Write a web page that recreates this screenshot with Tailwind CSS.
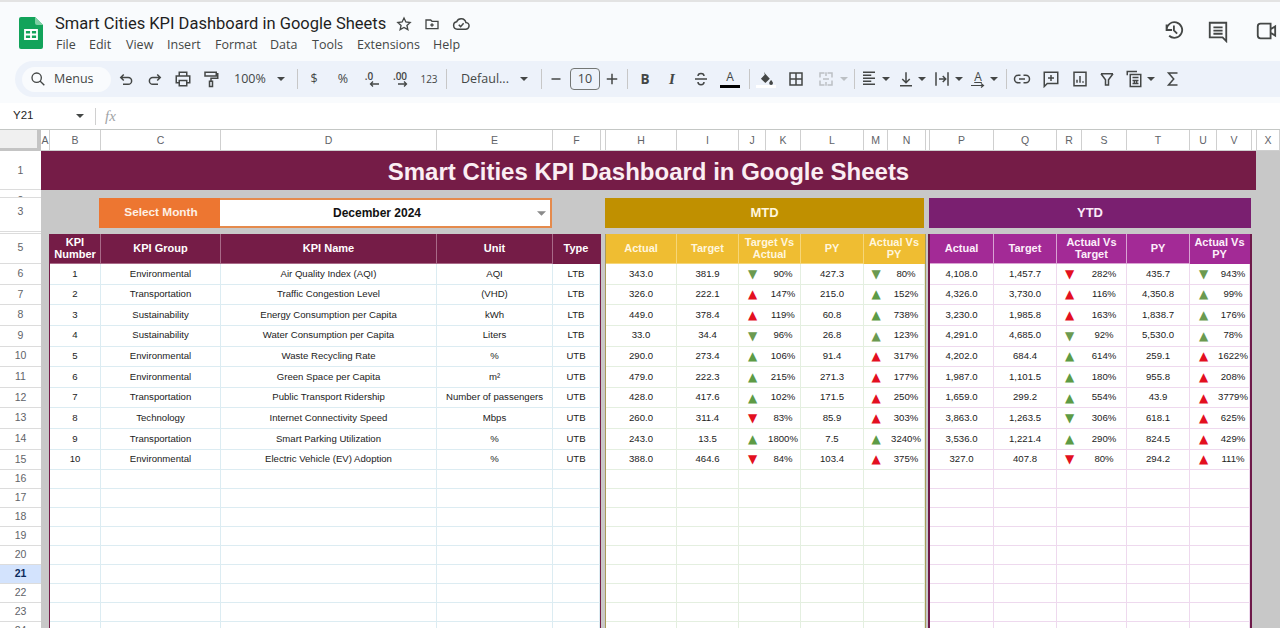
<!DOCTYPE html>
<html lang="en">
<head>
<meta charset="utf-8">
<title>Smart Cities KPI Dashboard in Google Sheets</title>
<script src="https://cdn.jsdelivr.net/npm/@tailwindcss/browser@4"></script>
</head>
<body class="w-[1280px] h-[628px] overflow-hidden bg-[#c8c8c8] font-['Liberation_Sans',Arial,sans-serif]">

<header class="h-[103px] bg-[#f9fbfd] border-t-2 border-[#e3e3e3] flex flex-col relative">
  <div class="h-[59px] flex items-start shrink-0">
    <svg class="w-[24px] h-[32px] ml-[19px] mt-[15px] shrink-0" viewBox="0 0 24 32"><path d="M2 0h14l8 8v22a2 2 0 0 1-2 2H2a2 2 0 0 1-2-2V2a2 2 0 0 1 2-2z" fill="#12a35a"/><path d="M16 0l8 8h-6a2 2 0 0 1-2-2z" fill="#7fcfa4"/><path d="M6 13h12v9H6z" fill="none" stroke="#fff" stroke-width="1.8"/><path d="M6 17.500h12M12 13v9" stroke="#fff" stroke-width="1.8"/></svg>
    <div class="ml-[12px] flex flex-col font-['Open_Sans',sans-serif]">
      <div class="flex items-center h-[24px] mt-[10px]">
        <span class="text-[16.500px] leading-[24px] font-['Roboto',sans-serif] text-[#1f1f1f] whitespace-nowrap w-[324px]">Smart Cities KPI Dashboard in Google Sheets</span>
        <svg class="w-[16px] h-[16px] ml-[17px] fill-none stroke-[#444746] stroke-2" viewBox="0 0 24 24"><path d="M12 3l2.800 6 6.400.7-4.800 4.400 1.400 6.400L12 17.200l-5.800 3.300 1.400-6.400L2.800 9.700 9.200 9z"/></svg>
        <svg class="w-[16px] h-[16px] ml-[12px] fill-none stroke-[#444746] stroke-2" viewBox="0 0 24 24"><path d="M3 6h7l2 2h9v11H3zM12 11v5M9.500 13.500h5"/></svg>
        <svg class="w-[18px] h-[18px] ml-[12px] fill-none stroke-[#444746] stroke-2" viewBox="0 0 24 24"><path d="M7 19a5 5 0 0 1-.8-9.900A6.500 6.500 0 0 1 18.500 10 4.500 4.500 0 0 1 18 19zM9 13l2.500 2.500L15.500 11"/></svg>
      </div>
      <nav class="flex text-[12.500px] leading-[18px] text-[#444746]">
        <span class="w-[33px] ml-[1px]">File</span><span class="w-[37px]">Edit</span><span class="w-[41px]">View</span><span class="w-[48px]">Insert</span><span class="w-[55px]">Format</span><span class="w-[42px]">Data</span><span class="w-[45px]">Tools</span><span class="w-[76px]">Extensions</span><span>Help</span>
      </nav>
    </div>
    <svg class="w-[22px] h-[22px] absolute left-[1162px] top-[17px] fill-none stroke-[#444746] stroke-2" viewBox="0 0 24 24"><path d="M4 12a8.500 8.500 0 1 1 2.800 6.300M4 6v6h6M12 7v5.500l3.500 3.500" transform="translate(1 0)"/></svg>
    <svg class="w-[22px] h-[24px] absolute left-[1207px] top-[17px] fill-none stroke-[#444746] stroke-2" viewBox="0 0 24 24"><path d="M3 3h18v20l-4-4H3zM7 8h10M7 11.500h10M7 15h10"/></svg>
    <svg class="w-[24px] h-[22px] absolute left-[1254px] top-[18px] fill-none stroke-[#444746] stroke-2" viewBox="0 0 24 24"><path d="M6 4h11v16H6a3 3 0 0 1-3-3V7a3 3 0 0 1 3-3zM17 10l5-3v10l-5-3"/></svg>
  </div>

  <div class="h-[36px] ml-[15px] rounded-l-[18px] bg-[#edf2fa] flex items-center pl-[7px] text-[#444746] font-['Open_Sans',sans-serif]">
    <div class="w-[89px] h-[25px] rounded-full bg-[#f9fbfd] flex items-center shrink-0">
      <svg class="w-[16px] h-[16px] ml-[8px] fill-none stroke-[#444746] stroke-2" viewBox="0 0 24 24"><path d="M10 3a7 7 0 1 1 0 14 7 7 0 0 1 0-14zM15 15l6.500 6.500"/></svg>
      <span class="ml-[8px] text-[12.500px]">Menus</span>
    </div>
    <svg class="w-[18px] h-[18px] ml-[6px] shrink-0 fill-none stroke-[#444746] stroke-2" viewBox="0 0 24 24"><path d="M9 6L5 10l4 4M5 10h10a4.500 4.500 0 0 1 0 9H8"/></svg>
    <svg class="w-[18px] h-[18px] ml-[11px] shrink-0 fill-none stroke-[#444746] stroke-2" viewBox="0 0 24 24"><path d="M15 6l4 4-4 4M19 10H9a4.500 4.500 0 0 0 0 9h7"/></svg>
    <svg class="w-[18px] h-[18px] ml-[10px] shrink-0 fill-none stroke-[#444746] stroke-2" viewBox="0 0 24 24"><path d="M7 8V3h10v5M7 17H3V8h18v9h-4M7 14h10v7H7z"/></svg>
    <svg class="w-[18px] h-[18px] ml-[10px] shrink-0 fill-none stroke-[#444746] stroke-2" viewBox="0 0 24 24"><path d="M4 3h15v5H4zM19 5h2v6h-9v4M10 15h4v7h-4z"/></svg>
    <span class="w-[32px] ml-[14px] text-[12.500px] shrink-0">100%</span>
    <svg class="w-[8px] h-[4px] ml-[11px] shrink-0 fill-[#444746]" viewBox="0 0 8 4"><path d="M0 0h8L4 4z"/></svg>
    <div class="w-px h-[20px] ml-[12px] bg-[#c7c7c7] shrink-0"></div>
    <span class="w-[18px] ml-[7px] text-center text-[12.500px] shrink-0">$</span>
    <span class="w-[18px] ml-[11px] text-center text-[12.500px] shrink-0">%</span>
    <span class="w-[18px] ml-[10px] flex flex-col items-center leading-none shrink-0"><span class="text-[10px] font-semibold leading-[10px] -ml-[4px]">.0</span><svg class="w-[10px] h-[6px] ml-[5px]" viewBox="0 0 10 6"><path d="M10 3H2M4 .500L1.500 3 4 5.500" fill="none" stroke="#444746" stroke-width="1.300"/></svg></span>
    <span class="w-[18px] ml-[11px] flex flex-col items-center leading-none shrink-0"><span class="text-[10px] font-semibold leading-[10px]">.00</span><svg class="w-[10px] h-[6px] ml-[5px]" viewBox="0 0 10 6"><path d="M0 3h8M6 .500L8.500 3 6 5.500" fill="none" stroke="#444746" stroke-width="1.300"/></svg></span>
    <span class="w-[18px] ml-[11px] text-center text-[10px] shrink-0">123</span>
    <div class="w-px h-[20px] ml-[8px] bg-[#c7c7c7] shrink-0"></div>
    <span class="w-[50px] ml-[14px] text-[12.500px] whitespace-nowrap shrink-0">Defaul...</span>
    <svg class="w-[8px] h-[4px] ml-[9px] shrink-0 fill-[#444746]" viewBox="0 0 8 4"><path d="M0 0h8L4 4z"/></svg>
    <div class="w-px h-[20px] ml-[13px] bg-[#c7c7c7] shrink-0"></div>
    <svg class="w-[18px] h-[18px] ml-[5px] shrink-0 stroke-[#444746] stroke-2" viewBox="0 0 24 24"><path d="M6 12h12"/></svg>
    <span class="w-[30px] h-[22px] ml-[5px] border border-[#747775] rounded-[4px] flex items-center justify-center text-[12.500px] shrink-0">10</span>
    <svg class="w-[18px] h-[18px] ml-[3px] shrink-0 stroke-[#444746] stroke-2" viewBox="0 0 24 24"><path d="M5 12h14M12 5v14"/></svg>
    <div class="w-px h-[20px] ml-[6px] bg-[#c7c7c7] shrink-0"></div>
    <span class="w-[18px] ml-[8px] text-center text-[13.500px] font-bold shrink-0">B</span>
    <span class="w-[18px] ml-[9px] text-center text-[15px] italic font-semibold font-['Liberation_Serif',serif] shrink-0">I</span>
    <svg class="w-[18px] h-[18px] ml-[11px] shrink-0 fill-none stroke-[#444746] stroke-2" viewBox="0 0 24 24"><path d="M4 12h16M8 8a4 3.500 0 0 1 8 0M8 16a4 3.500 0 0 0 8 0"/></svg>
    <span class="w-[18px] ml-[11px] flex flex-col items-center shrink-0"><span class="text-[12px] leading-[12px]">A</span><span class="w-[20px] h-[3px] mt-[2px] bg-black"></span></span>
    <div class="w-px h-[20px] ml-[10px] bg-[#c7c7c7] shrink-0"></div>
    <span class="w-[18px] ml-[7px] flex flex-col items-center shrink-0"><svg class="w-[16px] h-[14px] fill-[#444746]" viewBox="0 0 24 22"><path d="M9 1l1.500 3L18 12l-7 7-7-7 6-6zM20 14s3 3.500 3 5a3 3 0 0 1-6 0c0-1.500 3-5 3-5z"/></svg><span class="w-[20px] h-[3px] bg-white"></span></span>
    <svg class="w-[18px] h-[18px] ml-[12px] shrink-0 fill-none stroke-[#444746] stroke-2" viewBox="0 0 24 24"><path d="M4 4h16v16H4zM12 4v16M4 12h16"/></svg>
    <svg class="w-[18px] h-[18px] ml-[12px] shrink-0 fill-none stroke-[#bcc0c4] stroke-2" viewBox="0 0 24 24"><path d="M4 10V4h6M14 4h6v6M4 14v6h6M14 20h6v-6M12 3v5M12 16v5M8 12h8"/></svg>
    <svg class="w-[8px] h-[4px] ml-[5px] shrink-0 fill-[#bcc0c4]" viewBox="0 0 8 4"><path d="M0 0h8L4 4z"/></svg>
    <div class="w-px h-[20px] ml-[6px] bg-[#c7c7c7] shrink-0"></div>
    <svg class="w-[18px] h-[18px] ml-[5px] shrink-0 stroke-[#444746] stroke-2" viewBox="0 0 24 24"><path d="M4 3h16M4 7h11M4 11h16M4 15h11M4 19h16"/></svg>
    <svg class="w-[8px] h-[4px] ml-[4px] shrink-0 fill-[#444746]" viewBox="0 0 8 4"><path d="M0 0h8L4 4z"/></svg>
    <svg class="w-[18px] h-[18px] ml-[7px] shrink-0 fill-none stroke-[#444746] stroke-2" viewBox="0 0 24 24"><path d="M12 3v13M7 12l5 5 5-5M4 21h16"/></svg>
    <svg class="w-[8px] h-[4px] ml-[3px] shrink-0 fill-[#444746]" viewBox="0 0 8 4"><path d="M0 0h8L4 4z"/></svg>
    <svg class="w-[18px] h-[18px] ml-[7px] shrink-0 fill-none stroke-[#444746] stroke-2" viewBox="0 0 24 24"><path d="M4 3v18M20 3v18M8 12h9M13 8l4 4-4 4"/></svg>
    <svg class="w-[8px] h-[4px] ml-[4px] shrink-0 fill-[#444746]" viewBox="0 0 8 4"><path d="M0 0h8L4 4z"/></svg>
    <span class="w-[18px] ml-[6px] flex flex-col items-center shrink-0"><span class="text-[12px] leading-[13px] underline">A</span><svg class="w-[14px] h-[5px]" viewBox="0 0 14 5"><path d="M0 2.500h12M10 .500l2.500 2-2.500 2" fill="none" stroke="#444746" stroke-width="1.200"/></svg></span>
    <svg class="w-[8px] h-[4px] ml-[3px] shrink-0 fill-[#444746]" viewBox="0 0 8 4"><path d="M0 0h8L4 4z"/></svg>
    <div class="w-px h-[20px] ml-[8px] bg-[#c7c7c7] shrink-0"></div>
    <svg class="w-[18px] h-[18px] ml-[6px] shrink-0 fill-none stroke-[#444746] stroke-2" viewBox="0 0 24 24"><path d="M10 7H7a5 5 0 0 0 0 10h3M14 7h3a5 5 0 0 1 0 10h-3M8 12h8"/></svg>
    <svg class="w-[18px] h-[18px] ml-[11px] shrink-0 fill-none stroke-[#444746] stroke-2" viewBox="0 0 24 24"><path d="M3 3h18v15H7l-4 4zM12 6.500v8M8 10.500h8"/></svg>
    <svg class="w-[18px] h-[18px] ml-[11px] shrink-0 fill-none stroke-[#444746] stroke-2" viewBox="0 0 24 24"><path d="M4 3h16v18H4zM8 17v-4M12 17V8M16 17v-2"/></svg>
    <svg class="w-[18px] h-[18px] ml-[9px] shrink-0 fill-none stroke-[#444746] stroke-2" viewBox="0 0 24 24"><path d="M4 5h16M4 5l6 8v7h4v-7l6-8"/></svg>
    <svg class="w-[18px] h-[18px] ml-[9px] shrink-0 fill-none stroke-[#444746] stroke-2" viewBox="0 0 24 24"><path d="M3 7V2h13M7 6h14v16H7zM10 10h8M10 14h8M10 18h8M12.500 13v6M15.500 13v6"/></svg>
    <svg class="w-[8px] h-[4px] ml-[4px] shrink-0 fill-[#444746]" viewBox="0 0 8 4"><path d="M0 0h8L4 4z"/></svg>
    <svg class="w-[18px] h-[18px] ml-[9px] shrink-0 fill-none stroke-[#444746] stroke-2" viewBox="0 0 24 24"><path d="M18 4H6l7 8-7 8h12"/></svg>
  </div>
</header>

<div class="h-[27px] bg-white border-b border-[#c4c7c5] flex items-center text-[#1f1f1f]">
  <span class="w-[68px] pl-[13px] text-[11.500px]">Y21</span>
  <svg class="w-[8px] h-[4px] shrink-0 ml-[8px] fill-[#444746]" viewBox="0 0 8 4"><path d="M0 0h8L4 4z"/></svg>
  <div class="w-px h-[17px] ml-[11px] bg-[#d0d0d0]"></div>
  <span class="ml-[9px] text-[15px] italic text-[#a0a3a6] font-['Liberation_Serif',serif]">fx</span>
</div>

<div class="flex flex-col">
  <!-- column letters -->
  <div class="h-[21px] flex bg-white">
    <div class="w-[41px] bg-[#f0f0f0] border-r-[4px] border-b-[3px] border-[#c4c4c4] shrink-0"></div>
    <div class="flex-1 grid grid-cols-[9px_51px_120px_216px_116px_48px_5px_71px_62px_27px_35px_63px_24px_38px_4px_64px_63px_25px_45px_63px_27px_35px_5px_1fr] text-[10.500px] text-[#5f6368] [&>div]:flex [&>div]:items-center [&>div]:justify-center [&>div]:pt-px [&>div]:border-r [&>div]:border-b [&>div]:border-[#cfcfcf]">
      <div>A</div><div>B</div><div>C</div><div>D</div><div>E</div><div>F</div><div></div><div>H</div><div>I</div><div>J</div><div>K</div><div>L</div><div>M</div><div>N</div><div></div><div>P</div><div>Q</div><div>R</div><div>S</div><div>T</div><div>U</div><div>V</div><div></div><div>X</div>
    </div>
  </div>

  <div class="flex">
    <!-- row numbers -->
    <div class="w-[41px] shrink-0 bg-white grid grid-rows-[39px_8px_34px_1.500px_30.500px_repeat(10,20.630px)_repeat(9,19px)] text-[10.500px] text-[#5f6368] [&>div]:flex [&>div]:items-center [&>div]:justify-center [&>div]:overflow-hidden [&>div]:border-b [&>div]:border-[#dcdcdc]">
      <div class="pt-[2px]">1</div><div class="items-start! pt-[3px]">2</div><div class="pb-[6px]">3</div><div class="items-start!">4</div><div>5</div><div>6</div><div>7</div><div>8</div><div>9</div><div>10</div><div>11</div><div>12</div><div>13</div><div>14</div><div>15</div><div>16</div><div>17</div><div>18</div><div>19</div><div>20</div><div class="bg-[#d3e3fd] font-bold text-[#0b2a5c]">21</div><div>22</div><div>23</div><div>24</div>
    </div>

    <!-- sheet -->
    <div class="flex-1 flex flex-col text-[9.600px] text-[#222]">
      <div class="w-[1215px] h-[39px] pt-[3px] bg-[#751c47] flex items-center justify-center text-[24px] font-bold text-[#fbeef3]">Smart Cities KPI Dashboard in Google Sheets</div>
      <div class="h-[8px]"></div>
      <div class="h-[30px] flex">
        <div class="w-[121px] ml-[58px] pl-[3px] bg-[#ed7631] flex items-center justify-center text-[11.800px] font-bold text-[#fdf0e4]">Select Month</div>
        <div class="w-[332px] pr-[16px] bg-white border-2 border-l-0 border-[#e58a4c] flex items-center justify-center relative text-[12px] font-bold text-[#111]">
          December 2024
          <svg class="w-[9px] h-[5px] absolute right-[4px] top-[11px] fill-[#8a8a8a]" viewBox="0 0 8 4"><path d="M0 0h8L4 4z"/></svg>
        </div>
        <div class="w-[319px] ml-[53px] bg-[#c09000] flex items-center justify-center text-[13px] font-bold text-[#fff6dd]">MTD</div>
        <div class="w-[322px] ml-[5px] bg-[#7a1f70] flex items-center justify-center text-[13px] font-bold text-[#fbeaf8]">YTD</div>
      </div>
      <div class="h-[5.500px]"></div>

      <div class="flex items-start">
        <!-- KPI table -->
        <div class="ml-[8px] w-[552px] border-l border-r border-[#751c47] bg-white grid grid-cols-[51px_120px_216px_116px_47px] grid-rows-[30.500px_repeat(10,20.630px)_repeat(9,19px)] [&>div]:flex [&>div]:items-center [&>div]:justify-center [&>div]:text-center [&>div]:border-r [&>div]:border-b [&>div]:border-[#dcecf2]">
          <div class="bg-[#751c47] text-white font-bold text-[11px] leading-[12px] border-[#a86a88]!">KPI<br>Number</div><div class="bg-[#751c47] text-white font-bold text-[11px] border-[#a86a88]!">KPI Group</div><div class="bg-[#751c47] text-white font-bold text-[11px] border-[#a86a88]!">KPI Name</div><div class="bg-[#751c47] text-white font-bold text-[11px] border-[#a86a88]!">Unit</div><div class="bg-[#751c47] text-white font-bold text-[11px] border-[#751c47]!">Type</div>
          <div>1</div><div>Environmental</div><div>Air Quality Index (AQI)</div><div>AQI</div><div>LTB</div>
          <div>2</div><div>Transportation</div><div>Traffic Congestion Level</div><div>(VHD)</div><div>LTB</div>
          <div>3</div><div>Sustainability</div><div>Energy Consumption per Capita</div><div>kWh</div><div>LTB</div>
          <div>4</div><div>Sustainability</div><div>Water Consumption per Capita</div><div>Liters</div><div>LTB</div>
          <div>5</div><div>Environmental</div><div>Waste Recycling Rate</div><div>%</div><div>UTB</div>
          <div>6</div><div>Environmental</div><div>Green Space per Capita</div><div>m²</div><div>UTB</div>
          <div>7</div><div>Transportation</div><div>Public Transport Ridership</div><div>Number of passengers</div><div>UTB</div>
          <div>8</div><div>Technology</div><div>Internet Connectivity Speed</div><div>Mbps</div><div>UTB</div>
          <div>9</div><div>Transportation</div><div>Smart Parking Utilization</div><div>%</div><div>UTB</div>
          <div>10</div><div>Environmental</div><div>Electric Vehicle (EV) Adoption</div><div>%</div><div>UTB</div>
          <div></div><div></div><div></div><div></div><div></div>
          <div></div><div></div><div></div><div></div><div></div>
          <div></div><div></div><div></div><div></div><div></div>
          <div></div><div></div><div></div><div></div><div></div>
          <div></div><div></div><div></div><div></div><div></div>
          <div></div><div></div><div></div><div></div><div></div>
          <div></div><div></div><div></div><div></div><div></div>
          <div></div><div></div><div></div><div></div><div></div>
          <div></div><div></div><div></div><div></div><div></div>
        </div>

        <!-- MTD table -->
        <div class="ml-[4px] w-[321px] border-l border-r border-[#a89a5a] bg-white grid grid-cols-[71px_62px_27px_35px_63px_24px_37px] grid-rows-[30.500px_repeat(10,20.630px)_repeat(9,19px)] [&>div]:flex [&>div]:items-center [&>div]:justify-center [&>div]:text-center [&>div]:whitespace-nowrap [&>div]:border-r [&>div]:border-b [&>div]:border-[#e4efe0] [&>span]:flex [&>span]:items-center [&>span]:justify-center [&>span]:border-b [&>span]:border-[#e4efe0] [&>span]:text-[12px] [&>span]:font-['DejaVu_Sans',sans-serif]">
          <div class="bg-[#efbd32] text-[#fff6dd] font-bold text-[11px] border-[#f6d678]!">Actual</div><div class="bg-[#efbd32] text-[#fff6dd] font-bold text-[11px] border-[#f6d678]!">Target</div><div class="col-span-2 bg-[#efbd32] text-[#fff6dd] font-bold text-[11px] leading-[12px] border-[#f6d678]!">Target Vs<br>Actual</div><div class="bg-[#efbd32] text-[#fff6dd] font-bold text-[11px] border-[#f6d678]!">PY</div><div class="col-span-2 bg-[#efbd32] text-[#fff6dd] font-bold text-[11px] leading-[12px] border-[#efbd32]!">Actual Vs<br>PY</div>
          <div>343.0</div><div>381.9</div><span class="text-[#6b9a50]">▼</span><div>90%</div><div>427.3</div><span class="text-[#6b9a50]">▼</span><div>80%</div>
          <div>326.0</div><div>222.1</div><span class="text-[#e3101f]">▲</span><div>147%</div><div>215.0</div><span class="text-[#5d9b45]">▲</span><div>152%</div>
          <div>449.0</div><div>378.4</div><span class="text-[#e3101f]">▲</span><div>119%</div><div>60.8</div><span class="text-[#5d9b45]">▲</span><div>738%</div>
          <div>33.0</div><div>34.4</div><span class="text-[#6b9a50]">▼</span><div>96%</div><div>26.8</div><span class="text-[#6b9a50]">▲</span><div>123%</div>
          <div>290.0</div><div>273.4</div><span class="text-[#5d9b45]">▲</span><div>106%</div><div>91.4</div><span class="text-[#e3101f]">▲</span><div>317%</div>
          <div>479.0</div><div>222.3</div><span class="text-[#5d9b45]">▲</span><div>215%</div><div>271.3</div><span class="text-[#e3101f]">▲</span><div>177%</div>
          <div>428.0</div><div>417.6</div><span class="text-[#5d9b45]">▲</span><div>102%</div><div>171.5</div><span class="text-[#e3101f]">▲</span><div>250%</div>
          <div>260.0</div><div>311.4</div><span class="text-[#e3101f]">▼</span><div>83%</div><div>85.9</div><span class="text-[#e3101f]">▲</span><div>303%</div>
          <div>243.0</div><div>13.5</div><span class="text-[#5d9b45]">▲</span><div>1800%</div><div>7.5</div><span class="text-[#5d9b45]">▲</span><div>3240%</div>
          <div>388.0</div><div>464.6</div><span class="text-[#e3101f]">▼</span><div>84%</div><div>103.4</div><span class="text-[#e3101f]">▲</span><div>375%</div>
          <div></div><div></div><div class="col-span-2"></div><div></div><div class="col-span-2"></div>
          <div></div><div></div><div class="col-span-2"></div><div></div><div class="col-span-2"></div>
          <div></div><div></div><div class="col-span-2"></div><div></div><div class="col-span-2"></div>
          <div></div><div></div><div class="col-span-2"></div><div></div><div class="col-span-2"></div>
          <div></div><div></div><div class="col-span-2"></div><div></div><div class="col-span-2"></div>
          <div></div><div></div><div class="col-span-2"></div><div></div><div class="col-span-2"></div>
          <div></div><div></div><div class="col-span-2"></div><div></div><div class="col-span-2"></div>
          <div></div><div></div><div class="col-span-2"></div><div></div><div class="col-span-2"></div>
          <div></div><div></div><div class="col-span-2"></div><div></div><div class="col-span-2"></div>
        </div>

        <!-- YTD table -->
        <div class="ml-[2px] w-[324px] border-l-2 border-r-2 border-[#6e1a4a] bg-white grid grid-cols-[64px_63px_25px_45px_63px_27px_33px] grid-rows-[30.500px_repeat(10,20.630px)_repeat(9,19px)] [&>div]:flex [&>div]:items-center [&>div]:justify-center [&>div]:text-center [&>div]:whitespace-nowrap [&>div]:border-r [&>div]:border-b [&>div]:border-[#eed9ee] [&>span]:flex [&>span]:items-center [&>span]:justify-center [&>span]:border-b [&>span]:border-[#eed9ee] [&>span]:text-[12px] [&>span]:font-['DejaVu_Sans',sans-serif]">
          <div class="bg-[#a32a96] text-[#fdeefb] font-bold text-[11px] border-[#d9a3d3]!">Actual</div><div class="bg-[#a32a96] text-[#fdeefb] font-bold text-[11px] border-[#d9a3d3]!">Target</div><div class="col-span-2 bg-[#a32a96] text-[#fdeefb] font-bold text-[11px] leading-[12px] border-[#d9a3d3]!">Actual Vs<br>Target</div><div class="bg-[#a32a96] text-[#fdeefb] font-bold text-[11px] border-[#d9a3d3]!">PY</div><div class="col-span-2 bg-[#a32a96] text-[#fdeefb] font-bold text-[11px] leading-[12px] border-[#a32a96]!">Actual Vs<br>PY</div>
          <div>4,108.0</div><div>1,457.7</div><span class="text-[#e3101f]">▼</span><div>282%</div><div>435.7</div><span class="text-[#6b9a50]">▼</span><div>943%</div>
          <div>4,326.0</div><div>3,730.0</div><span class="text-[#e3101f]">▲</span><div>116%</div><div>4,350.8</div><span class="text-[#6b9a50]">▲</span><div>99%</div>
          <div>3,230.0</div><div>1,985.8</div><span class="text-[#e3101f]">▲</span><div>163%</div><div>1,838.7</div><span class="text-[#6b9a50]">▲</span><div>176%</div>
          <div>4,291.0</div><div>4,685.0</div><span class="text-[#6b9a50]">▼</span><div>92%</div><div>5,530.0</div><span class="text-[#6b9a50]">▲</span><div>78%</div>
          <div>4,202.0</div><div>684.4</div><span class="text-[#5d9b45]">▲</span><div>614%</div><div>259.1</div><span class="text-[#e3101f]">▲</span><div>1622%</div>
          <div>1,987.0</div><div>1,101.5</div><span class="text-[#5d9b45]">▲</span><div>180%</div><div>955.8</div><span class="text-[#e3101f]">▲</span><div>208%</div>
          <div>1,659.0</div><div>299.2</div><span class="text-[#5d9b45]">▲</span><div>554%</div><div>43.9</div><span class="text-[#e3101f]">▲</span><div>3779%</div>
          <div>3,863.0</div><div>1,263.5</div><span class="text-[#5d9b45]">▼</span><div>306%</div><div>618.1</div><span class="text-[#e3101f]">▲</span><div>625%</div>
          <div>3,536.0</div><div>1,221.4</div><span class="text-[#5d9b45]">▲</span><div>290%</div><div>824.5</div><span class="text-[#e3101f]">▲</span><div>429%</div>
          <div>327.0</div><div>407.8</div><span class="text-[#e3101f]">▼</span><div>80%</div><div>294.2</div><span class="text-[#e3101f]">▲</span><div>111%</div>
          <div></div><div></div><div class="col-span-2"></div><div></div><div class="col-span-2"></div>
          <div></div><div></div><div class="col-span-2"></div><div></div><div class="col-span-2"></div>
          <div></div><div></div><div class="col-span-2"></div><div></div><div class="col-span-2"></div>
          <div></div><div></div><div class="col-span-2"></div><div></div><div class="col-span-2"></div>
          <div></div><div></div><div class="col-span-2"></div><div></div><div class="col-span-2"></div>
          <div></div><div></div><div class="col-span-2"></div><div></div><div class="col-span-2"></div>
          <div></div><div></div><div class="col-span-2"></div><div></div><div class="col-span-2"></div>
          <div></div><div></div><div class="col-span-2"></div><div></div><div class="col-span-2"></div>
          <div></div><div></div><div class="col-span-2"></div><div></div><div class="col-span-2"></div>
        </div>
      </div>
    </div>
  </div>
</div>
</body>
</html>
